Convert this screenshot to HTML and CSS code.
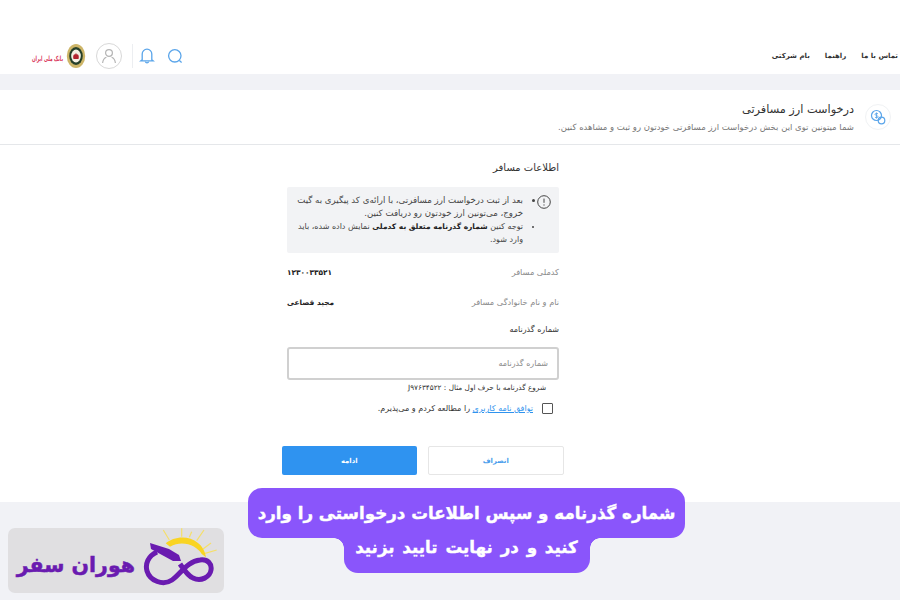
FILE: index.html
```html
<!DOCTYPE html>
<html lang="fa" dir="rtl">
<head>
<meta charset="utf-8">
<title>درخواست ارز مسافرتی</title>
<link rel="stylesheet" href="styles.css">
</head>
<body>
<div class="page">
  <header class="topbar">
    <nav class="nav">
      <span>تماس با ما</span>
      <span>راهنما</span>
      <span>بام شرکتی</span>
    </nav>
    <div class="tools">
      <svg class="tool-search" width="18" height="18" viewBox="0 0 18 18" fill="none" stroke="#5aa5ea" stroke-width="1.300"><circle cx="8.800" cy="8.800" r="6.200"/><path d="M13.400 13.400l2.200 2"/></svg>
      <svg class="tool-bell" width="16" height="18" viewBox="0 0 16 18" fill="none" stroke="#5aa5ea" stroke-width="1.300"><path d="M3.200 12.800V7a4.800 4.800 0 0 1 9.600 0v5.800l1.300 1H1.900z"/><path d="M6.300 14.600a1.800 1.800 0 0 0 3.400 0"/></svg>
      <span class="divider"></span>
      <span class="avatar">
        <svg width="16" height="16" viewBox="0 0 16 16" fill="none" stroke="#b4b4b4" stroke-width="1.200"><circle cx="8" cy="5" r="3.400"/><path d="M1.600 15c.4-3.600 2.600-5.400 3.800-5.800M14.400 15c-.4-3.600-2.600-5.400-3.800-5.800"/></svg>
      </span>
      <div class="bank">
        <svg width="20" height="26" viewBox="0 0 20 26"><ellipse cx="10" cy="13" rx="9.200" ry="12" fill="#cdb568"/><ellipse cx="10" cy="13" rx="6.800" ry="9" fill="#26402a"/><ellipse cx="10" cy="13" rx="4.800" ry="6.400" fill="#f6f1e4"/><path d="M7.500 16c-.8-2.400 0-4.400 1-5 .2 1.200.4 1.300 1.500-1.200 1.100 2.500 1.300 2.400 1.500 1.200 1 .6 1.800 2.600 1 5z" fill="#b3232f"/></svg>
        <span class="bank-name">بانک ملی ایران</span>
      </div>
    </div>
  </header>
  <main class="panel">
    <section class="heading">
      <span class="heading-icon">
        <svg width="16" height="16" viewBox="0 0 16 16" fill="none" stroke="#5aa5ea" stroke-width="1.200"><circle cx="6.500" cy="6.500" r="5"/><circle cx="11.500" cy="11.500" r="3.300"/><path d="M8 4.800c-1.500-.8-3-.4-3 .7s3 .8 3 2.100-1.800 1.400-3 .6M6.500 3.500v6" stroke-width=".9"/></svg>
      </span>
      <div class="heading-text">
        <h1>درخواست ارز مسافرتی</h1>
        <p>شما میتونین توی این بخش درخواست ارز مسافرتی خودتون رو ثبت و مشاهده کنین.</p>
      </div>
    </section>
    <section class="form">
      <h2>اطلاعات مسافر</h2>
      <div class="notice">
        <svg class="notice-icon" width="14" height="14" viewBox="0 0 14 14" fill="none" stroke="#444" stroke-width="1"><circle cx="7" cy="7" r="6.300"/><path d="M7 3.600v4.200M7 9.400v1.200"/></svg>
        <ul>
          <li class="item-wide">بعد از ثبت درخواست ارز مسافرتی، با ارائه‌ی کد پیگیری به گیت<br>خروج، می‌تونین ارز خودتون رو دریافت کنین.</li>
          <li>توجه کنین <b>شماره گذرنامه متعلق به کدملی</b> نمایش داده شده، باید<br>وارد شود.</li>
        </ul>
      </div>
      <div class="row row-code"><span class="label">کدملی مسافر</span><b class="value">۱۲۳۰۰۳۳۵۲۱</b></div>
      <div class="row row-name"><span class="label">نام و نام خانوادگی مسافر</span><b class="value">مجید قصاعی</b></div>
      <label class="field-label">شماره گذرنامه</label>
      <div class="input">شماره گذرنامه</div>
      <p class="hint">شروع گذرنامه با حرف اول مثال : J۹۷۶۳۴۵۲۲</p>
      <div class="agree">
        <span class="check"></span>
        <span><a>توافق نامه کاربری</a> را مطالعه کردم و می‌پذیرم.</span>
      </div>
    </section>
    <div class="actions">
      <button class="btn btn-cancel">انصراف</button>
      <button class="btn btn-next">ادامه</button>
    </div>
  </main>
  <footer class="footer"></footer>
  <div class="caption">
    <span class="cap-line">شماره گذرنامه و سپس اطلاعات درخواستی را وارد</span>
    <span class="cap-line cap-second">کنید و در نهایت تایید بزنید</span>
  </div>
  <div class="brand">
    <svg width="75" height="58" viewBox="0 0 75 58" fill="none">
      <g stroke="#f5df6a" stroke-width="1.200"><path d="M20.300 2l6 10M38.700 .3v8.400M48.700 3.700l-2.400 5.600M61 2l-7.300 10.700M73.700 22L62 25.300M68 15l-8 6"/></g>
      <path d="M22.700 15.300C30 9 45 6.500 55 15c4 3 7 8 8 14.300l-4.300-3.300C54 18 40 11.500 27 18.700z" fill="#f9d423"/>
      <path d="M14 24C5 28 2 36 4 43c3 10 16 15 25 9 8-5 15-19 28-20 8-1 12 4 11 10-1 7-10 12-18 8-5-2-9-8-13-14" stroke="#6a1bb0" stroke-width="5"/>
      <path d="M7 15l19 6 10 6 2 6h-8L8 21z" fill="#6a1bb0"/>
    </svg>
    <span class="brand-name">هوران سفر</span>
  </div>
</div>
</body>
</html>
```
FILE: styles.css
```css
* { box-sizing: border-box; }
html, body { margin: 0; padding: 0; }
body {
  width: 900px;
  height: 600px;
  overflow: hidden;
  background: #fff;
  font-family: "DejaVu Sans", "Noto Sans", sans-serif;
  color: #333;
}
.page {
  position: relative;
  width: 900px;
  height: 600px;
  display: flex;
  flex-direction: column;
  background: #f1f2f6;
}
.topbar {
  height: 74px;
  flex: none;
  background: #fff;
  display: flex;
  justify-content: space-between;
  align-items: flex-end;
  padding: 0 0 4px 33px;
}
.nav {
  display: flex;
  gap: 15px;
  height: 24px;
  align-items: center;
  font-size: 7px;
  font-weight: 700;
  color: #333;
  margin-right: 2px;
  margin-bottom: 2px;
  white-space: nowrap;
}
.tools { display: flex; align-items: center; height: 28px; }
.tool-search { flex: none; margin-left: 11px; }
.tool-bell { flex: none; margin-left: 6px; }
.divider { width: 1px; height: 24px; background: #eceef1; margin-left: 10px; }
.avatar {
  width: 26px;
  height: 26px;
  border: 1px solid #d8d8d8;
  border-radius: 50%;
  display: flex;
  align-items: center;
  justify-content: center;
  margin-left: 10px;
}
.bank { display: flex; align-items: center; gap: 3px; }
.bank-name {
  width: 30px;
  font-size: 4.200px;
  font-weight: 700;
  color: #d9385e;
  white-space: nowrap;
  transform: translateY(2px) scaleY(1.700);
}
.panel {
  margin-top: 16px;
  height: 412px;
  flex: none;
  background: #fff;
}
.heading {
  height: 55px;
  border-bottom: 1px solid #e5e7ea;
  display: flex;
  align-items: center;
  padding-right: 9px;
  gap: 11px;
}
.heading-icon {
  width: 26px;
  height: 26px;
  border: 1px solid #f0f2f4;
  border-radius: 50%;
  display: flex;
  align-items: center;
  justify-content: center;
  flex: none;
}
h1 { margin: 0 0 3px; font-size: 11.300px; line-height: 16px; font-weight: 400; color: #333; }
.heading-text p { margin: 0; font-size: 8.500px; line-height: 12px; color: #777; }
.form { width: 272px; margin-right: 341px; padding-top: 15px; }
h2 { margin: 0 0 11px; font-size: 10px; line-height: 16px; font-weight: 400; color: #333; }
.notice {
  background: #f2f3f5;
  border-radius: 2px;
  height: 66px;
  padding: 7px 8px 0 7px;
  display: flex;
  gap: 3px;
}
.notice-icon { flex: none; margin-top: 1px; }
ul { margin: 0; padding: 0 11px 0 0; font-size: 8px; line-height: 13px; color: #444; white-space: nowrap; }
.item-wide { font-size: 8.600px; }
li b { color: #222; font-size: 7.500px; }
.row {
  display: flex;
  justify-content: space-between;
  align-items: center;
  height: 14px;
}
.row-code { margin-top: 12px; }
.row-name { margin-top: 16px; }
.label { color: #8a8a8a; font-size: 8.200px; }
.value { color: #222; font-size: 7.400px; }
.field-label { display: block; margin-top: 15px; font-size: 8px; line-height: 12px; color: #333; }
.input {
  margin-top: 11px;
  height: 33px;
  border: 2px solid #d0d0d0;
  border-radius: 3px;
  padding: 0 9px;
  display: flex;
  align-items: center;
  font-size: 8px;
  color: #8a8a8a;
}
.hint { margin: 2px 13px 0 0; font-size: 7.300px; line-height: 11px; color: #333; }
.agree {
  display: flex;
  align-items: center;
  gap: 9px;
  margin-top: 10px;
  margin-right: 6px;
  font-size: 8px;
  color: #333;
}
.check { width: 11px; height: 11px; border: 1px solid #555; border-radius: 1px; flex: none; }
.agree a { color: #2f93ee; text-decoration: underline; }
.actions {
  display: flex;
  gap: 11px;
  width: 282px;
  margin-right: 336px;
  margin-top: 32px;
}
.btn {
  flex: 1;
  height: 29px;
  border-radius: 2px;
  font-family: inherit;
  font-size: 6.800px;
  font-weight: 700;
}
.btn-cancel { background: #fff; border: 1px solid #e6e6e6; color: #4a9eec; }
.btn-next { background: #2f93f0; border: 0; color: #fff; }
.footer { flex: 1; }
.caption {
  position: absolute;
  top: 488px;
  left: 248px;
  width: 437px;
  display: flex;
  flex-direction: column;
  align-items: center;
  color: #fff;
  font-weight: 700;
  font-size: 16.700px;
  -webkit-text-stroke: .4px #fff;
  text-align: center;
}
.cap-line {
  display: flex;
  align-items: center;
  justify-content: center;
  background: #8a55fb;
  width: 437px;
  height: 50px;
  border-radius: 14px;
  white-space: nowrap;
}
.cap-second {
  position: relative;
  width: 246px;
  height: 35px;
  border-radius: 0 0 14px 14px;
  padding-bottom: 17px;
  word-spacing: 2px;
}
.cap-second::before,
.cap-second::after {
  content: "";
  position: absolute;
  top: 0;
  width: 10px;
  height: 10px;
}
.cap-second::before {
  left: -10px;
  background: radial-gradient(circle at 0 100%, transparent 9.500px, #8a55fb 10px);
}
.cap-second::after {
  right: -10px;
  background: radial-gradient(circle at 100% 100%, transparent 9.500px, #8a55fb 10px);
}
.brand {
  position: absolute;
  left: 8px;
  top: 528px;
  width: 216px;
  height: 65px;
  background: #e0dfe1;
  border-radius: 7px;
  display: flex;
  align-items: flex-start;
  padding-right: 6px;
  gap: 8px;
}
.brand svg { flex: none; }
.brand-name {
  margin-top: 22px;
  line-height: 30px;
  font-size: 20.500px;
  font-weight: 700;
  -webkit-text-stroke: .5px #6a1bb0;
  color: #6a1bb0;
  white-space: nowrap;
}
```
